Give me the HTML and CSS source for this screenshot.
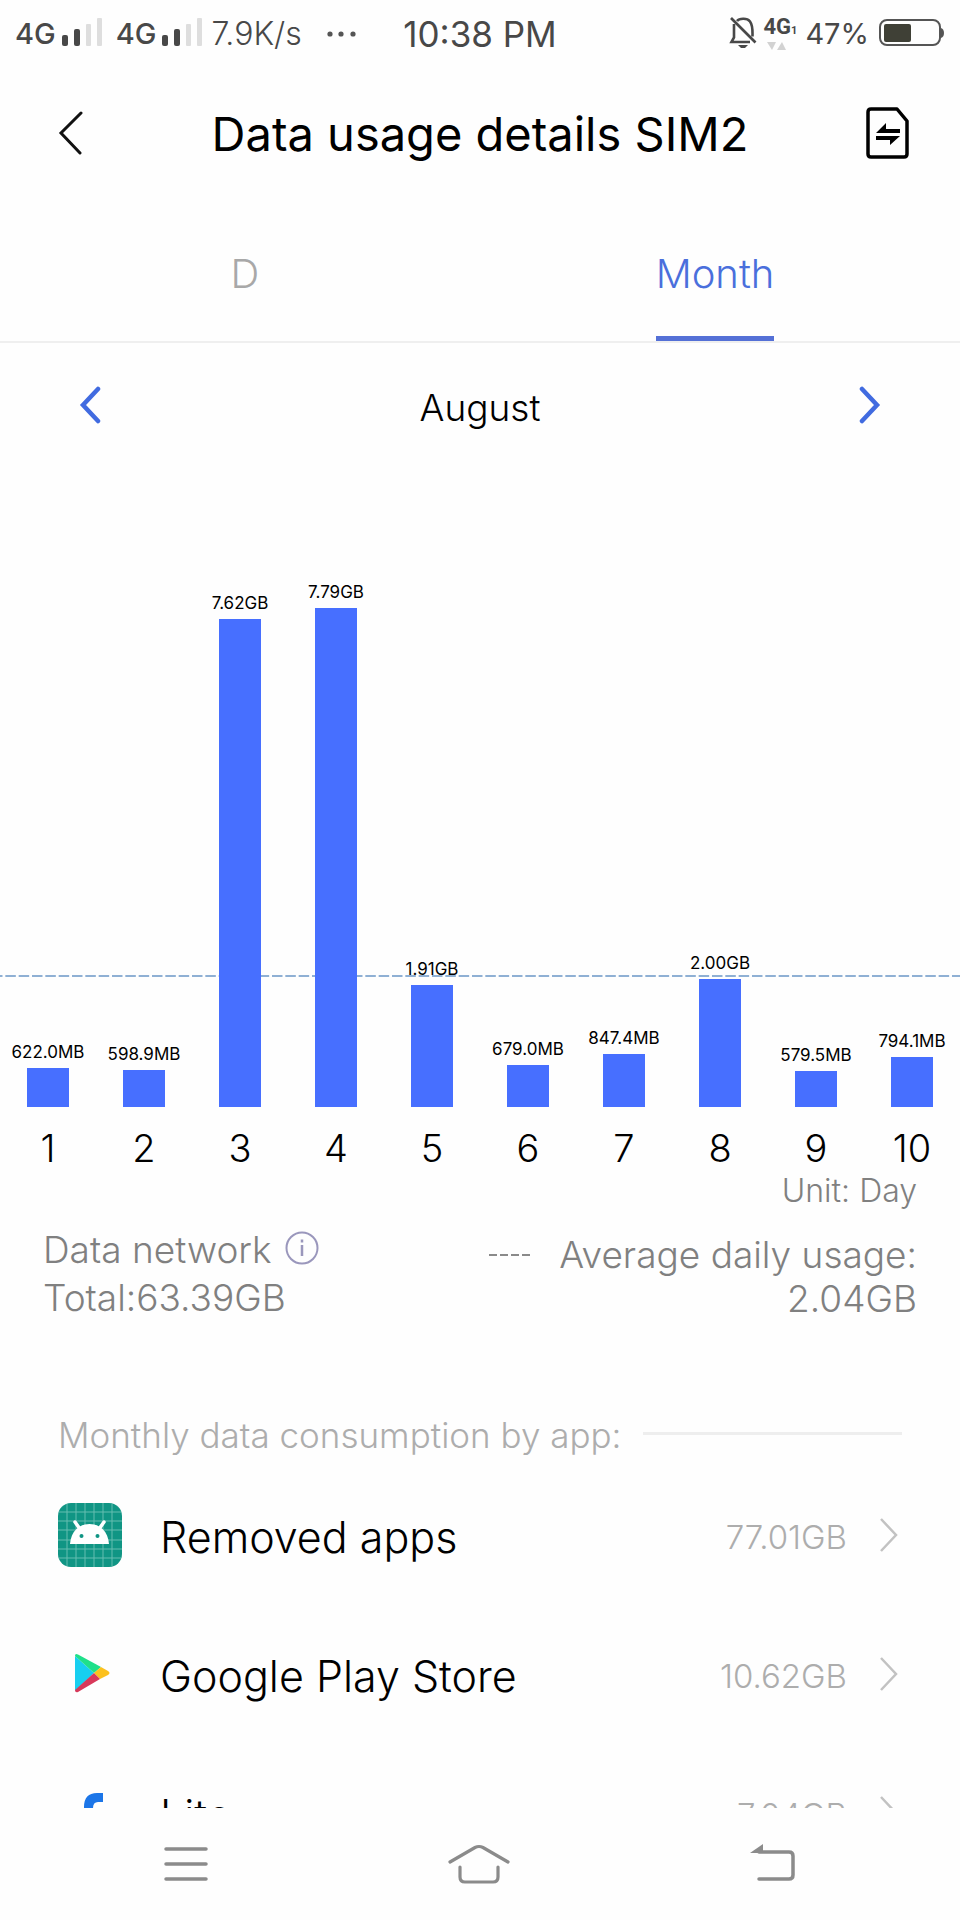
FILE: index.html
```
<!DOCTYPE html>
<html lang="en">
<head>
    <meta charset="UTF-8">
    <meta name="viewport" content="width=device-width, initial-scale=1.0">
    <title>Data usage details SIM2</title>
    <link rel="stylesheet" href="styles.css">
</head>
<body>
    <div class="status-bar">
        <div class="status-left">
            <span class="network">4G</span>
            <svg class="signal" width="42" height="34" viewBox="0 0 42 34">
                <rect x="0" y="18" width="6" height="11" rx="2" fill="#484848"/>
                <rect x="12" y="12" width="6" height="17" rx="2" fill="#484848"/>
                <rect x="24" y="7" width="5" height="22" rx="1" fill="#dedede"/>
                <rect x="35" y="1" width="5" height="28" rx="1" fill="#dedede"/>
            </svg>
            <span class="network second">4G</span>
            <svg class="signal" width="42" height="34" viewBox="0 0 42 34">
                <rect x="0" y="18" width="6" height="11" rx="2" fill="#484848"/>
                <rect x="12" y="12" width="6" height="17" rx="2" fill="#484848"/>
                <rect x="24" y="7" width="5" height="22" rx="1" fill="#dedede"/>
                <rect x="35" y="1" width="5" height="28" rx="1" fill="#dedede"/>
            </svg>
            <span class="speed">7.9K/s</span>
            <svg class="dots" width="30" height="6" viewBox="0 0 30 6" fill="#555">
                <circle cx="4" cy="3" r="2.6"/>
                <circle cx="15" cy="3" r="2.6"/>
                <circle cx="27" cy="3" r="2.6"/>
            </svg>
        </div>
        <div class="clock">10:38 PM</div>
        <div class="status-right">
            <svg width="28" height="34" viewBox="0 0 28 34" fill="none" stroke="#484848" stroke-width="2.6">
                <path d="M8 4C10 1.500 18 .5 21 4.500c3 4 2.500 8 2.500 15"/>
                <path d="M5 7V20.500L2.500 25H21"/>
                <path d="M2 1L26.500 25.500"/>
                <path d="M9 28h10l-3 3h-4z" fill="#484848" stroke="none"/>
            </svg>
            <div class="volte">
                <span>4G<small>1</small></span>
                <svg width="20" height="10" viewBox="0 0 20 10" fill="#d2d2d2">
                    <path d="M0 1h9L5 9zM10 9h9L15 1z"/>
                </svg>
            </div>
            <span class="battery-level">47%</span>
            <svg width="66" height="30" viewBox="0 0 66 30">
                <rect x="1" y="1" width="60" height="25" rx="7" fill="none" stroke="#555" stroke-width="2"/>
                <rect x="5" y="5" width="27" height="18" rx="2" fill="#3f4036"/>
                <path d="M62 9q3 1 3 5t-3 5z" fill="#555"/>
            </svg>
        </div>
    </div>

    <header class="header">
        <button class="icon-button back" aria-label="Back">
            <svg width="26" height="44" viewBox="0 0 26 44" fill="none" stroke="#111" stroke-width="3" stroke-linecap="round">
                <path d="M23 2L3 22l19 20"/>
            </svg>
        </button>
        <h1>Data usage details SIM2</h1>
        <button class="icon-button" aria-label="Switch SIM">
            <svg width="44" height="54" viewBox="0 0 44 54">
                <path d="M5 3H31L41 15V48q0 3-3 3H5q-3 0-3-3V6q0-3 3-3z" fill="none" stroke="#000" stroke-width="3.500" stroke-linejoin="round"/>
                <path d="M10 27l10-10v6h14v4zM34 30L24 39v-5H10v-4z" fill="#000"/>
            </svg>
        </button>
    </header>

    <nav class="tabs">
        <button class="tab">D</button>
        <button class="tab active">Month</button>
    </nav>

    <main class="content">
        <div class="month-picker">
            <button class="icon-button" aria-label="Previous month">
                <svg width="24" height="38" viewBox="0 0 24 38" fill="none" stroke="#416be0" stroke-width="4.500" stroke-linecap="round">
                    <path d="M20 3L5 19l15 16"/>
                </svg>
            </button>
            <h2>August</h2>
            <button class="icon-button" aria-label="Next month">
                <svg width="24" height="38" viewBox="0 0 24 38" fill="none" stroke="#416be0" stroke-width="4.500" stroke-linecap="round">
                    <path d="M4 3l15 16L4 35"/>
                </svg>
            </button>
        </div>

        <!-- full height of the plot is 10GB -->
        <div class="plot">
            <svg class="average-line" style="bottom: 20.3%" width="100%" height="2">
                <line x1="-8" y1="1" x2="100%" y2="1" stroke="#8fb0d4" stroke-width="2" stroke-dasharray="10.500 2.833"/>
            </svg>
            <div class="column"><span>622.0MB</span><div class="bar" style="height: 6.07%"></div></div>
            <div class="column"><span>598.9MB</span><div class="bar" style="height: 5.85%"></div></div>
            <div class="column"><span>7.62GB</span><div class="bar" style="height: 76.2%"></div></div>
            <div class="column"><span>7.79GB</span><div class="bar" style="height: 77.9%"></div></div>
            <div class="column"><span>1.91GB</span><div class="bar" style="height: 19.1%"></div></div>
            <div class="column"><span>679.0MB</span><div class="bar" style="height: 6.63%"></div></div>
            <div class="column"><span>847.4MB</span><div class="bar" style="height: 8.28%"></div></div>
            <div class="column"><span>2.00GB</span><div class="bar" style="height: 20%"></div></div>
            <div class="column"><span>579.5MB</span><div class="bar" style="height: 5.66%"></div></div>
            <div class="column"><span>794.1MB</span><div class="bar" style="height: 7.75%"></div></div>
        </div>
        <div class="axis">
            <span>1</span>
            <span>2</span>
            <span>3</span>
            <span>4</span>
            <span>5</span>
            <span>6</span>
            <span>7</span>
            <span>8</span>
            <span>9</span>
            <span>10</span>
        </div>
        <p class="unit">Unit: Day</p>

        <div class="summary">
            <div class="total">
                <p>Data network
                    <button class="icon-button" aria-label="About data network">
                        <svg width="34" height="38" viewBox="0 0 34 38" fill="none" stroke="#9a97bc" stroke-width="2">
                            <circle cx="17" cy="17" r="15.500"/>
                            <path d="M17 14v11M17 8.500v3" stroke-width="2.500"/>
                        </svg>
                    </button>
                </p>
                <p>Total:63.39GB</p>
            </div>
            <div class="average">
                <p>
                    <svg width="42" height="2" viewBox="0 0 42 2" stroke="#8a8a8a" stroke-width="2">
                        <path d="M0 1h42" stroke-dasharray="8 3"/>
                    </svg>
                    Average daily usage:
                </p>
                <p>2.04GB</p>
            </div>
        </div>

        <h3 class="list-title">Monthly data consumption by app:</h3>
        <ul class="app-list">
            <li>
                <a href="#" class="app">
                    <svg class="app-icon" width="64" height="64" viewBox="0 0 64 64">
                        <rect width="64" height="64" rx="13" fill="#109584"/>
                        <path d="M9 1v62M18 0v64M27 0v64M36 0v64M45 0v64M54 1v62M1 9h62M0 18h64M0 27h64M0 37h64M0 46h64M1 55h62" stroke="#65bdb0" stroke-width="1" fill="none"/>
                        <path d="M17 19l5 7M46 19l-5 7" stroke="#fff" stroke-width="3.500" stroke-linecap="round"/>
                        <path d="M12 41C13 28 21 21 31.500 21S50 28 51 41z" fill="#fff"/>
                        <circle cx="23.500" cy="33" r="2" fill="#109584"/>
                        <circle cx="39.500" cy="33" r="2" fill="#109584"/>
                    </svg>
                    <span class="app-name">Removed apps</span>
                    <span class="app-usage">77.01GB</span>
                    <svg width="18" height="34" viewBox="0 0 18 34" fill="none" stroke="#c2c2c2" stroke-width="2.500">
                        <path d="M1 1l15 16L1 33"/>
                    </svg>
                </a>
            </li>
            <li>
                <a href="#" class="app">
                    <svg class="app-icon" width="64" height="64" viewBox="0 0 64 64">
                        <path d="M17 14v35l19-18z" fill="#17cff0"/>
                        <path d="M17 14q0-3 3-1.500L43 25l-7 6z" fill="#1fe08a"/>
                        <path d="M43 25l7 4q3 2 0 4l-8 4-6-6z" fill="#fcc11e"/>
                        <path d="M36 31l6 6-22 13q-3 1-3-2z" fill="#d8395a"/>
                    </svg>
                    <span class="app-name">Google Play Store</span>
                    <span class="app-usage">10.62GB</span>
                    <svg width="18" height="34" viewBox="0 0 18 34" fill="none" stroke="#c2c2c2" stroke-width="2.500">
                        <path d="M1 1l15 16L1 33"/>
                    </svg>
                </a>
            </li>
            <li>
                <a href="#" class="app">
                    <svg class="app-icon" width="64" height="64" viewBox="0 0 64 64">
                        <path d="M45 12H39Q26 12 26 26v4h-6v9h6v18h9V39h8l2-9H35v-3q0-6 5-6h5z" fill="#1c76e8"/>
                    </svg>
                    <span class="app-name">Lite</span>
                    <span class="app-usage">7.04GB</span>
                    <svg width="18" height="34" viewBox="0 0 18 34" fill="none" stroke="#c2c2c2" stroke-width="2.500">
                        <path d="M1 1l15 16L1 33"/>
                    </svg>
                </a>
            </li>
        </ul>
    </main>

    <footer class="nav-bar">
        <button class="icon-button" aria-label="Recent apps">
            <svg width="46" height="36" viewBox="0 0 46 36" stroke="#8b8b8b" stroke-width="3.500" stroke-linecap="round">
                <path d="M3 3h40M3 18h40M3 33h40"/>
            </svg>
        </button>
        <button class="icon-button" aria-label="Home">
            <svg width="64" height="42" viewBox="0 0 64 42" fill="none" stroke="#8b8b8b" stroke-width="3.200" stroke-linecap="round">
                <path d="M3 19L28 4.500q4-2 8 0L61 19"/>
                <path d="M13 24v10q0 5 5 5h28q5 0 5-5V24"/>
            </svg>
        </button>
        <button class="icon-button" aria-label="Back">
            <svg width="48" height="42" viewBox="0 0 48 42" fill="none" stroke="#8b8b8b" stroke-width="3.500" stroke-linecap="round">
                <path d="M10 9h30q4 0 4 4v19q0 4-4 4H10"/>
                <path d="M1 10L14 1v9z" fill="#8b8b8b" stroke="none"/>
            </svg>
        </button>
    </footer>
</body>
</html>
```
FILE: styles.css
```
* {
    box-sizing: border-box;
}
body {
    font-family: Inter, Roboto, sans-serif;
    margin: 0;
    height: 100vh;
    display: flex;
    flex-direction: column;
    background-color: #fefefe;
    color: #000;
}
h1, h2, h3, p, ul {
    margin: 0;
    padding: 0;
    font-weight: 300;
}
svg {
    display: block;
    flex-shrink: 0;
}
button {
    font-family: inherit;
    background: none;
    border: none;
    padding: 0;
    cursor: pointer;
}

/* Status bar */
.status-bar {
    display: grid;
    grid-template-columns: 1fr auto 1fr;
    align-items: center;
    height: 67px;
    padding: 0 15px;
    color: #484848;
    white-space: nowrap;
}
.status-left, .status-right {
    display: flex;
    align-items: center;
}
.status-right {
    justify-content: flex-end;
    gap: 6px;
}
.network {
    font-size: 29px;
    font-weight: 500;
}
.network.second {
    margin-left: 12px;
}
.signal {
    margin-left: 6px;
}
.speed {
    margin-left: 7px;
    font-size: 32px;
    font-weight: 300;
}
.dots {
    margin-left: 24px;
}
.clock {
    font-size: 35px;
}
.volte {
    font-family: Roboto, sans-serif;
    font-size: 22px;
    font-weight: 700;
    line-height: 20px;
}
.volte small {
    font-size: 11px;
}
.volte svg {
    margin-left: 4px;
}
.battery-level {
    margin-left: 2px;
    margin-right: 4px;
    font-size: 29px;
}

/* Title */
.header {
    display: grid;
    grid-template-columns: 1fr auto 1fr;
    align-items: center;
    height: 132px;
    padding: 0 50px;
}
.header h1 {
    font-size: 47px;
    font-weight: 400;
}
.header .icon-button {
    justify-self: end;
}
.header .back {
    justify-self: start;
    padding-left: 8px;
}

/* Tabs */
.tabs {
    display: grid;
    grid-template-columns: 1fr 1fr;
    justify-items: center;
    height: 144px;
    padding: 0 10px;
    border-bottom: 2px solid #efefef;
}
.tab {
    position: relative;
    padding-top: 6px;
    font-size: 40px;
    font-weight: 300;
    color: #a8a8a8;
}
.tab.active {
    color: #4a6fdc;
}
.tab.active::after {
    content: "";
    position: absolute;
    left: 0;
    right: 0;
    bottom: 0;
    height: 5px;
    background-color: #5470d6;
}

/* Month switcher */
.content {
    flex: 1;
    min-height: 0;
    overflow: hidden;
}
.month-picker {
    display: flex;
    align-items: center;
    justify-content: space-between;
    height: 124px;
    padding: 0 78px;
}
.month-picker h2 {
    padding-top: 4px;
    font-size: 37px;
}

/* Chart */
.plot {
    position: relative;
    display: flex;
    height: 640px;
}
.average-line {
    position: absolute;
    left: 0;
}
.column {
    position: relative;
    flex: 1;
    display: flex;
    flex-direction: column;
    align-items: center;
    justify-content: flex-end;
}
.column span {
    margin-bottom: 6px;
    font-size: 17px;
    font-weight: 400;
    line-height: 20px;
}
.bar {
    width: 42px;
    background-color: #476fff;
}
.axis {
    display: flex;
    margin-top: 17px;
    font-size: 38px;
    font-weight: 300;
    line-height: 48px;
}
.axis span {
    flex: 1;
    text-align: center;
}
.unit {
    padding-right: 43px;
    font-size: 32px;
    line-height: 38px;
    text-align: right;
    color: #808080;
}

/* Totals */
.summary {
    display: flex;
    align-items: flex-end;
    justify-content: space-between;
    margin-top: 16px;
    padding: 0 43px;
    font-size: 37px;
    color: #808080;
}
.summary p {
    display: flex;
    align-items: center;
}
.total p {
    gap: 13px;
    line-height: 48px;
}
.average {
    padding-bottom: 1px;
}
.average p {
    justify-content: flex-end;
    gap: 28px;
    line-height: 44px;
}

/* Apps */
.list-title {
    display: flex;
    align-items: center;
    gap: 22px;
    margin-top: 89px;
    padding: 0 58px;
    font-size: 35px;
    line-height: 48px;
    color: #adadad;
}
.list-title::after {
    content: "";
    flex: 1;
    height: 3px;
    margin-bottom: 4px;
    background-color: #eee;
}
.app-list {
    margin-top: 6px;
    list-style: none;
}
.app {
    display: flex;
    align-items: center;
    height: 139px;
    padding: 0 62px 0 58px;
    color: #000;
    text-decoration: none;
}
.app-name {
    flex: 1;
    margin-left: 38px;
    padding-top: 4px;
    font-size: 43px;
    font-weight: 300;
}
.app-usage {
    margin-right: 33px;
    padding-top: 4px;
    font-size: 33px;
    font-weight: 300;
    color: #adadad;
}

/* System navigation */
.nav-bar {
    display: flex;
    justify-content: space-between;
    align-items: center;
    height: 112px;
    padding: 0 163px;
}
```
